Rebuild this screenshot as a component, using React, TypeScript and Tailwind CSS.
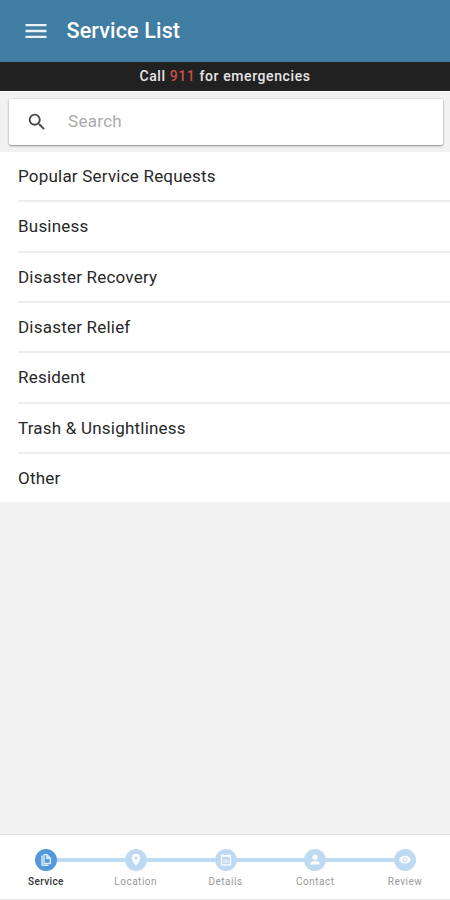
import type { ReactNode } from "react";
import { MdMenu, MdSearch } from "react-icons/md";

const SERVICES = [
  "Popular Service Requests",
  "Business",
  "Disaster Recovery",
  "Disaster Relief",
  "Resident",
  "Trash & Unsightliness",
  "Other",
];

type Step = { label: string; icon: ReactNode };

const STEPS: Step[] = [
  {
    label: "Service",
    icon: (
      <g fill="none" stroke="#dcecfa" strokeWidth="1.4" strokeLinejoin="round">
        <path d="M9 5.6h2.8l3.6 3.7v5.2H9z" />
        <path d="M7 6.4v9.8h6.4" />
        <path d="M11.3 6v4h4z" fill="#dcecfa" strokeWidth="0.5" />
      </g>
    ),
  },
  {
    label: "Location",
    icon: (
      <path
        d="M11 5a4 4 0 0 0-4 4c0 3 4 7.6 4 7.6S15 12 15 9a4 4 0 0 0-4-4zm0 5.4a1.4 1.4 0 1 1 0-2.8 1.4 1.4 0 0 1 0 2.8z"
        fill="#fff"
        fillRule="evenodd"
      />
    ),
  },
  {
    label: "Details",
    icon: (
      <g>
        <path d="M6.5 6.8h9v9h-9z" fill="none" stroke="#fff" strokeWidth="1.3" />
        <path d="M8 5.2v2M14 5.2v2M6 7h10" stroke="#fff" strokeWidth="1.5" />
        <path d="M8.2 10.5h5.6v3.6H8.2z" fill="#fff" opacity="0.4" />
      </g>
    ),
  },
  {
    label: "Contact",
    icon: (
      <g fill="#fff">
        <circle cx="11" cy="8.2" r="2.6" />
        <path d="M6.3 15.6v-1.2c0-1.7 3-2.5 4.7-2.5s4.7.8 4.7 2.5v1.2z" />
      </g>
    ),
  },
  {
    label: "Review",
    icon: (
      <g>
        <path d="M5 10.7C6 8.4 8.3 6.8 11 6.8s5 1.6 6 3.9c-1 2.3-3.3 3.9-6 3.9s-5-1.6-6-3.9z" fill="#fff" />
        <circle cx="11" cy="10.7" r="2.1" fill="#fff" stroke="#bedaf3" strokeWidth="1" />
      </g>
    ),
  },
];

function StepItem({ step, index }: { step: Step; index: number }) {
  const active = index === 0;
  return (
    <li className="flex flex-1 flex-col items-center">
      <div className="flex w-full items-center">
        <span className={`h-1 flex-1 ${index === 0 ? "" : "bg-[#bedbf4]"}`} />
        <svg
          viewBox="0 0 22 22"
          className={`size-[22px] rounded-full ${active ? "bg-[#5399da]" : "bg-[#bedaf3]"}`}
        >
          {step.icon}
        </svg>
        <span className={`h-1 flex-1 ${index === STEPS.length - 1 ? "" : "bg-[#bedbf4]"}`} />
      </div>
      <span
        className={`mt-1 text-[10px] leading-[14px] ${
          active ? "font-medium tracking-[0.4px] text-[#333]" : "tracking-[0.5px] text-[#999]"
        }`}
      >
        {step.label}
      </span>
    </li>
  );
}

export default function App() {
  return (
    <div className="flex h-screen w-full flex-col overflow-hidden bg-[#f2f2f2] font-['Roboto',sans-serif]">
      <header className="flex h-[62px] shrink-0 items-center bg-[#407da3] pl-[21.5px] text-white">
        <MdMenu className="size-[28px] text-[#e9f1f5]" />
        <h1 className="ml-[17px] pt-px text-[21.5px] font-medium tracking-[0.15px]">Service List</h1>
      </header>

      <div className="h-[29px] shrink-0 bg-[#212121] text-center text-[14px] leading-[29px] font-medium tracking-[0.6px] text-[#e6e6e6]">
        Call <span className="text-[#c9504b]">911</span> for emergencies
      </div>

      {/* Search */}
      <div className="h-[61px] shrink-0 border-t border-white pt-[7px] pr-[7.5px] pl-[8.5px]">
        <label className="flex h-[46px] items-center rounded-[2px] bg-white pl-[17px] shadow-[0_1px_2px_rgba(0,0,0,0.4),0_0_3px_rgba(0,0,0,0.1)]">
          <MdSearch className="size-[22px] text-[#484848]" />
          <input
            type="text"
            placeholder="Search"
            className="ml-[20.5px] min-w-0 flex-1 text-[17px] tracking-[0.3px] outline-none placeholder:text-[#aaa]"
          />
        </label>
      </div>

      <ul className="shrink-0 bg-white pl-[18px]">
        {SERVICES.map((name) => (
          <li
            key={name}
            className="h-[50.35px] border-b-2 border-[#ededed] pt-[11px] text-[17px] leading-[26px] tracking-[0.21px] text-[#282828] last:h-[48px] last:border-b-0"
          >
            {name}
          </li>
        ))}
      </ul>

      {/* Progress steps */}
      <nav className="mt-auto h-[66px] shrink-0 border-y border-[#e2e2e2] bg-white pt-[14px]">
        <ol className="flex pl-px">
          {STEPS.map((step, i) => (
            <StepItem key={step.label} step={step} index={i} />
          ))}
        </ol>
      </nav>
    </div>
  );
}
